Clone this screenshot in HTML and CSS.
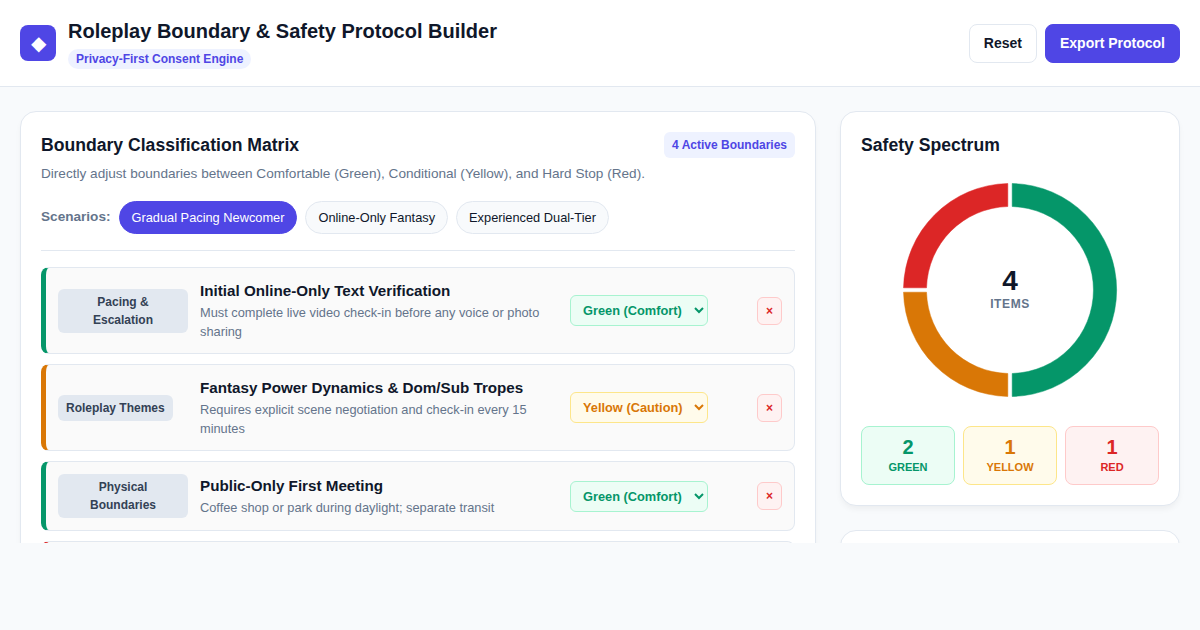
FILE: index.html
```html
<!DOCTYPE html>
<html lang="en">

<head>
    <meta charset="UTF-8">
    <meta name="viewport" content="width=device-width, initial-scale=1.0">
    <title>Roleplay Boundary &amp; Safety Protocol Builder</title>
    <link rel="stylesheet" href="styles.css">
</head>

<body>
    <div class="app">
        <header class="header">
            <div class="brand">
                <div class="logo">◆</div>
                <div>
                    <h1 class="app-title">Roleplay Boundary &amp; Safety Protocol Builder</h1>
                    <span class="tagline">Privacy-First Consent Engine</span>
                </div>
            </div>
            <div class="actions">
                <button class="btn">Reset</button>
                <button class="btn btn-primary">Export Protocol</button>
            </div>
        </header>

        <main class="main">
            <section class="card matrix">
                <div class="card-head">
                    <h2 class="card-title">Boundary Classification Matrix</h2>
                    <span class="count">4 Active Boundaries</span>
                </div>
                <p class="intro">Directly adjust boundaries between Comfortable (Green), Conditional (Yellow), and Hard Stop (Red).</p>

                <div class="scenarios">
                    <span class="scenarios-label">Scenarios:</span>
                    <button class="chip chip-active">Gradual Pacing Newcomer</button>
                    <button class="chip">Online-Only Fantasy</button>
                    <button class="chip">Experienced Dual-Tier</button>
                </div>

                <div class="rows">
                    <div class="row row-green">
                        <span class="tag">Pacing &amp; Escalation</span>
                        <div>
                            <h3 class="row-title">Initial Online-Only Text Verification</h3>
                            <p class="row-desc">Must complete live video check-in before any voice or photo sharing</p>
                        </div>
                        <select class="level level-green">
                            <option>Green (Comfort)</option>
                            <option>Yellow (Caution)</option>
                            <option>Red (Hard Stop)</option>
                        </select>
                        <button class="remove">×</button>
                    </div>

                    <div class="row row-yellow">
                        <span class="tag">Roleplay Themes</span>
                        <div>
                            <h3 class="row-title">Fantasy Power Dynamics &amp; Dom/Sub Tropes</h3>
                            <p class="row-desc">Requires explicit scene negotiation and check-in every 15 minutes</p>
                        </div>
                        <select class="level level-yellow">
                            <option>Yellow (Caution)</option>
                            <option>Green (Comfort)</option>
                            <option>Red (Hard Stop)</option>
                        </select>
                        <button class="remove">×</button>
                    </div>

                    <div class="row row-green">
                        <span class="tag">Physical Boundaries</span>
                        <div>
                            <h3 class="row-title">Public-Only First Meeting</h3>
                            <p class="row-desc">Coffee shop or park during daylight; separate transit</p>
                        </div>
                        <select class="level level-green">
                            <option>Green (Comfort)</option>
                            <option>Yellow (Caution)</option>
                            <option>Red (Hard Stop)</option>
                        </select>
                        <button class="remove">×</button>
                    </div>

                    <div class="row row-red row-cut"></div>
                </div>
            </section>

            <aside class="side">
                <section class="card spectrum">
                    <h2 class="card-title">Safety Spectrum</h2>
                    <div class="donut">
                        <svg width="220" height="220" viewBox="0 0 220 220">
                            <path class="seg-green" d="M112.2 3.52 A106.5 106.5 0 0 1 112.2 216.48 L112.2 193.47 A83.5 83.5 0 0 0 112.2 26.53 Z" />
                            <path class="seg-yellow" d="M107.8 216.48 A106.5 106.5 0 0 1 3.52 112.2 L26.53 112.2 A83.5 83.5 0 0 0 107.8 193.47 Z" />
                            <path class="seg-red" d="M3.52 107.8 A106.5 106.5 0 0 1 107.8 3.52 L107.8 26.53 A83.5 83.5 0 0 0 26.53 107.8 Z" />
                        </svg>
                        <div class="donut-label">
                            <span class="donut-num">4</span>
                            <span class="donut-text">ITEMS</span>
                        </div>
                    </div>
                    <div class="stats">
                        <div class="stat stat-green"><span class="stat-num">2</span><span class="stat-name">GREEN</span></div>
                        <div class="stat stat-yellow"><span class="stat-num">1</span><span class="stat-name">YELLOW</span></div>
                        <div class="stat stat-red"><span class="stat-num">1</span><span class="stat-name">RED</span></div>
                    </div>
                </section>
                <section class="card next-card"></section>
            </aside>
        </main>
    </div>
</body>

</html>
```

FILE: styles.css
```css
* {
    box-sizing: border-box;
}

body {
    margin: 0;
    height: 630px;
    background-color: #f8fafc;
    color: #0f172a;
    font-family: "Liberation Sans", Arial, sans-serif;
}

.app {
    height: 543px;
    overflow: hidden;
}

.header {
    display: flex;
    align-items: center;
    justify-content: space-between;
    height: 87px;
    padding: 0 20px;
    background-color: #fff;
    border-bottom: 1px solid #e2e8f0;
}

.brand {
    display: flex;
    align-items: center;
    gap: 12px;
}

.logo {
    display: flex;
    align-items: center;
    justify-content: center;
    width: 36px;
    height: 36px;
    border-radius: 8px;
    background-color: #4f46e5;
    color: #fff;
    font-size: 20px;
}

.app-title {
    margin: 2px 0 6px;
    font-size: 20px;
    line-height: 24px;
    font-weight: 700;
}

.tagline {
    display: inline-block;
    padding: 2px 8px;
    border-radius: 999px;
    background-color: #eef2ff;
    color: #4f46e5;
    font-size: 12px;
    line-height: 16px;
    font-weight: 700;
}

.actions {
    display: flex;
    gap: 8px;
}

.btn {
    height: 39px;
    padding: 0 14px;
    border: 1px solid #e2e8f0;
    border-radius: 8px;
    background-color: #fff;
    color: #0f172a;
    font-family: inherit;
    font-size: 14px;
    font-weight: 700;
}

.btn-primary {
    border-color: #4f46e5;
    background-color: #4f46e5;
    color: #fff;
}

.main {
    display: grid;
    grid-template-columns: 796px 340px;
    gap: 24px;
    padding: 24px 20px;
}

.card {
    border: 1px solid #e2e8f0;
    border-radius: 16px;
    background-color: #fff;
    padding: 20px;
    box-shadow: 0 4px 6px -1px rgba(0, 0, 0, .05);
}

.card-head {
    display: flex;
    align-items: center;
    justify-content: space-between;
}

.card-title {
    margin: 0;
    font-size: 17.6px;
    line-height: 26px;
    font-weight: 700;
}

.count {
    padding: 5px 8px;
    border-radius: 6px;
    background-color: #eef2ff;
    color: #4f46e5;
    font-size: 12px;
    line-height: 16px;
    font-weight: 700;
}

.intro {
    margin: 6px 0 17px;
    color: #64748b;
    font-size: 13.6px;
    line-height: 20px;
}

.scenarios {
    display: flex;
    align-items: center;
    gap: 8px;
    padding-bottom: 16px;
    margin-bottom: 16px;
    border-bottom: 1px solid #e2e8f0;
}

.scenarios-label {
    margin-bottom: 2px;
    color: #64748b;
    font-size: 13.6px;
    font-weight: 700;
}

.chip {
    height: 33px;
    padding: 0 12px;
    border: 1px solid #e2e8f0;
    border-radius: 999px;
    background-color: #f8fafc;
    color: #0f172a;
    font-family: inherit;
    font-size: 12.8px;
}

.chip-active {
    border-color: #4f46e5;
    background-color: #4f46e5;
    color: #fff;
}

.rows {
    display: flex;
    flex-direction: column;
    gap: 10px;
}

.row {
    display: grid;
    grid-template-columns: 130px 1fr 150px 50px;
    align-items: center;
    gap: 12px;
    padding: 12px;
    border: 1px solid #e2e8f0;
    border-left-width: 5px;
    border-radius: 8px;
    background-color: #fafafa;
}

.row-green {
    border-left-color: #059669;
}

.row-yellow {
    border-left-color: #d97706;
}

.row-red {
    border-left-color: #dc2626;
}

.row-cut {
    height: 70px;
}

.tag {
    justify-self: start;
    padding: 4px 8px;
    border-radius: 6px;
    background-color: #e2e8f0;
    color: #334155;
    font-size: 12px;
    line-height: 18px;
    font-weight: 700;
    text-align: center;
}

.row-title {
    margin: 0 0 2px;
    font-size: 15.2px;
    line-height: 21px;
    font-weight: 700;
}

.row-desc {
    margin: 0;
    color: #64748b;
    font-size: 12.8px;
    line-height: 19px;
}

.level {
    width: 138px;
    height: 31px;
    padding: 0 4px 0 8px;
    border: 1px solid;
    border-radius: 6px;
    font-family: inherit;
    font-size: 12.8px;
    font-weight: 700;
}

.level-green {
    border-color: #a7f3d0;
    background-color: #ecfdf5;
    color: #059669;
}

.level-yellow {
    border-color: #fde68a;
    background-color: #fffbeb;
    color: #d97706;
}

.remove {
    justify-self: end;
    width: 25px;
    height: 28px;
    padding: 0;
    border: 1px solid #fecaca;
    border-radius: 6px;
    background-color: #fef2f2;
    color: #dc2626;
    font-family: inherit;
    font-size: 12px;
    font-weight: 700;
}

.side {
    display: flex;
    flex-direction: column;
    gap: 24px;
}

.donut {
    position: relative;
    width: 220px;
    height: 220px;
    margin: 22px auto 26px;
}

.donut svg {
    display: block;
}

.seg-green {
    fill: #059669;
    stroke: #059669;
    stroke-width: .5;
    stroke-linejoin: round;
}

.seg-yellow {
    fill: #d97706;
    stroke: #d97706;
    stroke-width: .5;
    stroke-linejoin: round;
}

.seg-red {
    fill: #dc2626;
    stroke: #dc2626;
    stroke-width: .5;
    stroke-linejoin: round;
}

.donut-label {
    position: absolute;
    top: calc(50% - 1px);
    left: 50%;
    display: flex;
    flex-direction: column;
    align-items: center;
    transform: translate(-50%, -50%);
}

.donut-num {
    font-size: 28px;
    line-height: 30px;
    font-weight: 700;
}

.donut-text {
    color: #64748b;
    font-size: 12px;
    line-height: 16px;
    font-weight: 700;
    letter-spacing: .6px;
}

.stats {
    display: grid;
    grid-template-columns: repeat(3, 1fr);
    gap: 8px;
}

.stat {
    display: flex;
    flex-direction: column;
    align-items: center;
    height: 59px;
    padding-top: 8px;
    border: 1px solid;
    border-radius: 8px;
}

.stat-num {
    font-size: 20px;
    line-height: 24px;
    font-weight: 700;
}

.stat-name {
    margin-top: 1px;
    font-size: 11px;
    line-height: 14px;
    font-weight: 700;
}

.stat-green {
    border-color: #a7f3d0;
    background-color: #ecfdf5;
    color: #059669;
}

.stat-yellow {
    border-color: #fde68a;
    background-color: #fffbeb;
    color: #d97706;
}

.stat-red {
    border-color: #fecaca;
    background-color: #fef2f2;
    color: #dc2626;
}

.next-card {
    height: 200px;
    flex: none;
}
```
